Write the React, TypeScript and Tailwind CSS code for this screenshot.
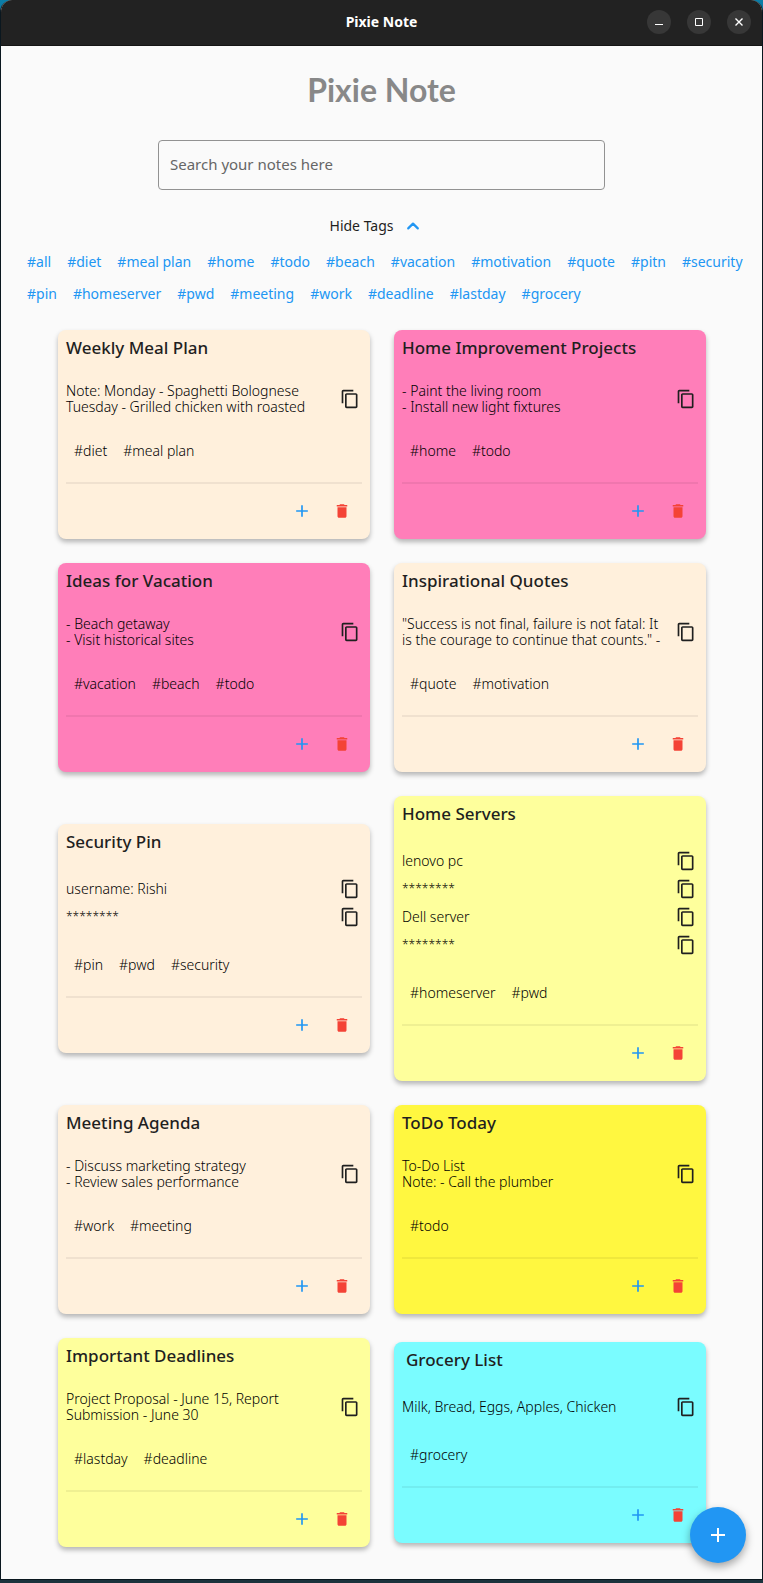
import React from "react";

type Tone = "cream" | "pink" | "lemon" | "yellow" | "aqua";

interface Note {
  title: string;
  tone: Tone;
  rows: string[];
  tags: string[];
  indent?: boolean;
}

const tones: Record<Tone, string> = {
  cream: "bg-[#fff0dc]",
  pink: "bg-[#ff7eb9]",
  lemon: "bg-[#feff9c]",
  yellow: "bg-[#fff740]",
  aqua: "bg-[#7afcff]",
};

const MASK = "********";

const tags = [
  "all", "diet", "meal plan", "home", "todo", "beach", "vacation", "motivation", "quote", "pitn", "security",
  "pin", "homeserver", "pwd", "meeting", "work", "deadline", "lastday", "grocery",
];

const notes: Note[] = [
  { title: "Weekly Meal Plan", tone: "cream", rows: ["Note: Monday - Spaghetti Bolognese\nTuesday - Grilled chicken with roasted"], tags: ["diet", "meal plan"] },
  { title: "Home Improvement Projects", tone: "pink", rows: ["- Paint the living room\n- Install new light fixtures"], tags: ["home", "todo"] },
  { title: "Ideas for Vacation", tone: "pink", rows: ["- Beach getaway\n- Visit historical sites"], tags: ["vacation", "beach", "todo"] },
  { title: "Inspirational Quotes", tone: "cream", rows: ["\"Success is not final, failure is not fatal: It\nis the courage to continue that counts.\" -"], tags: ["quote", "motivation"] },
  { title: "Security Pin", tone: "cream", rows: ["username: Rishi", MASK], tags: ["pin", "pwd", "security"] },
  { title: "Home Servers", tone: "lemon", rows: ["lenovo pc", MASK, "Dell server", MASK], tags: ["homeserver", "pwd"] },
  { title: "Meeting Agenda", tone: "cream", rows: ["- Discuss marketing strategy\n- Review sales performance"], tags: ["work", "meeting"] },
  { title: "ToDo Today", tone: "yellow", rows: ["To-Do List\nNote: - Call the plumber"], tags: ["todo"] },
  { title: "Important Deadlines", tone: "lemon", rows: ["Project Proposal - June 15, Report\nSubmission - June 30"], tags: ["lastday", "deadline"] },
  { title: "Grocery List", tone: "aqua", rows: ["Milk, Bread, Eggs, Apples, Chicken"], tags: ["grocery"], indent: true },
];

function Icon({ d, className }: { d: string; className: string }) {
  return (
    <svg viewBox="0 0 24 24" fill="currentColor" aria-hidden="true" className={className}>
      <path d={d} />
    </svg>
  );
}

const ADD = "M19 13h-6v6h-2v-6H5v-2h6V5h2v6h6v2z";
const TRASH = "M6 19c0 1.1.9 2 2 2h8c1.1 0 2-.9 2-2V7H6v12zM19 4h-3.5l-1-1h-5l-1 1H5v2h14V4z";
const COPY = "M16 1H4c-1.1 0-2 .9-2 2v14h2V3h12V1zm3 4H8c-1.1 0-2 .9-2 2v14c0 1.1.9 2 2 2h11c1.1 0 2-.9 2-2V7c0-1.1-.9-2-2-2zm0 16H8V7h11v14z";

function WindowButton({ label, children }: { label: string; children: React.ReactNode }) {
  return (
    <button type="button" aria-label={label} className="flex size-6 items-center justify-center rounded-full bg-[#373737] text-white">
      <svg viewBox="0 0 16 16" fill="none" stroke="currentColor" aria-hidden="true" className="size-4">
        {children}
      </svg>
    </button>
  );
}

function TitleBar() {
  return (
    <header className="grid h-[46px] grid-cols-[1fr_auto_1fr] items-center border-b border-[#151515] bg-[#222222] px-[11px] pb-px text-white">
      <span />
      <span className="text-sm font-bold">Pixie Note</span>
      <div className="flex justify-end gap-4">
        <WindowButton label="Minimize">
          <path d="M4 10.5h8" />
        </WindowButton>
        <WindowButton label="Maximize">
          <path d="M4.5 4.5h7v7h-7z" />
        </WindowButton>
        <WindowButton label="Close">
          <path d="M4.5 4.5l7 7M11.5 4.5l-7 7" strokeWidth="1.4" />
        </WindowButton>
      </div>
    </header>
  );
}

function NoteCard({ note }: { note: Note }) {
  return (
    <article className={`rounded-lg px-2 pt-[6px] pb-2 text-[#1f1f1f] shadow-[0_3px_5px_rgba(0,0,0,0.28)] ${tones[note.tone]}`}>
      <h2 className={`mb-[21px] text-[17px] leading-6 font-medium whitespace-nowrap ${note.indent ? "pl-1" : ""}`}>{note.title}</h2>
      {note.rows.map((row, i) => (
        <div key={i} className="flex items-center justify-between py-[2px] pr-[2px]">
          <p className={`font-light whitespace-pre text-black ${row === MASK ? "text-xs leading-4" : "text-sm leading-4"}`}>{row}</p>
          <button type="button" aria-label="Copy" className="my-[2px]">
            <Icon d={COPY} className="size-5" />
          </button>
        </div>
      ))}
      <ul className="mt-6 flex gap-4 px-2 text-sm leading-5 font-light text-black">
        {note.tags.map((tag) => (
          <li key={tag}>#{tag}</li>
        ))}
      </ul>
      <hr className="mt-[21px] mb-[7px] border-t-2 border-black/6" />
      <div className="flex justify-end">
        <button type="button" aria-label="Add" className="flex size-10 items-center justify-center text-[#2196f3]">
          <Icon d={ADD} className="size-5" />
        </button>
        <button type="button" aria-label="Delete" className="flex size-10 items-center justify-center text-[#f44336]">
          <Icon d={TRASH} className="size-[18px]" />
        </button>
      </div>
    </article>
  );
}

export default function App() {
  return (
    <div className="min-h-screen bg-gradient-to-b from-[#0a7ea8] from-0% via-[#1b333d] via-10% to-[#1b333d] pb-1 font-['Noto_Sans',sans-serif]">
      <div className="relative overflow-hidden rounded-t-xl border-x border-b border-[#0a171f] bg-[#fafafa]">
        <TitleBar />
        <main className="pb-8">
          <h1 className="mt-6 text-center font-['Lato',sans-serif] text-[32px] leading-10 font-bold text-[#888888]">Pixie Note</h1>
          <div className="mt-[30px] flex justify-center px-4">
            <input
              type="search"
              aria-label="Search notes"
              placeholder="Search your notes here"
              className="h-[50px] w-full max-w-[447px] rounded border border-[#929292] bg-transparent px-[11px] pb-[2px] text-[15px] text-[#1f1f1f] outline-none placeholder:text-[#666666]"
            />
          </div>
          <div className="mt-6 flex justify-center">
            <button type="button" className="flex items-center gap-2 pr-2 text-sm text-[#1f1f1f]">
              Hide Tags
              <svg viewBox="0 0 24 24" fill="none" stroke="currentColor" strokeWidth="2.2" strokeLinecap="round" strokeLinejoin="round" aria-hidden="true" className="size-6 text-[#2196f3]">
                <path d="M7.2 14.4l4.8-4.8 4.8 4.8" />
              </svg>
            </button>
          </div>
          <nav className="mt-2 flex flex-wrap pr-2 pl-[18px] text-sm text-[#2196f3]">
            {tags.map((tag) => (
              <a key={tag} href={`#${tag.replace(" ", "-")}`} className="px-2 leading-8">
                #{tag}
              </a>
            ))}
          </nav>
          <section className="mt-5 grid grid-cols-2 items-center gap-6 pr-14 pl-[57px]">
            {notes.map((note) => (
              <NoteCard key={note.title} note={note} />
            ))}
          </section>
        </main>
        <button
          type="button"
          aria-label="New note"
          className="absolute right-4 bottom-4 flex size-14 items-center justify-center rounded-full bg-[#2196f3] text-white shadow-[0_4px_8px_rgba(0,0,0,0.35)]"
        >
          <Icon d={ADD} className="size-6" />
        </button>
      </div>
    </div>
  );
}
